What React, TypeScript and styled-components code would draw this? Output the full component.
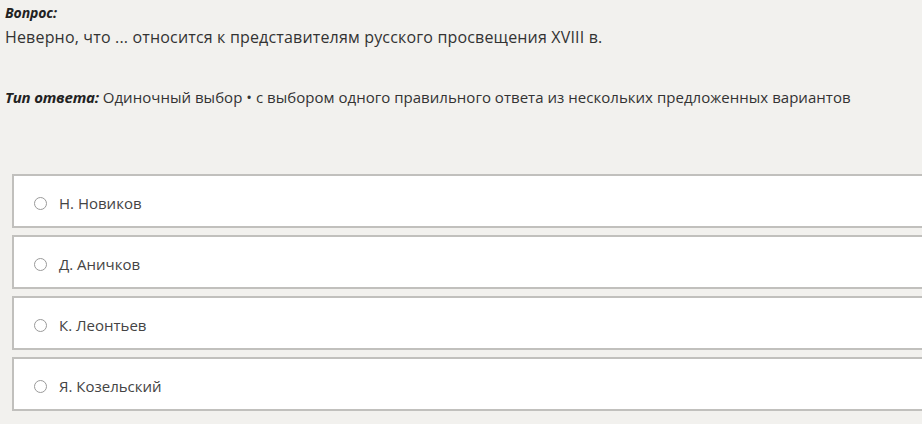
import React from 'react';
import styled, { createGlobalStyle } from 'styled-components';

const GlobalStyle = createGlobalStyle`
  html, body {
    margin: 0;
    padding: 0;
    background: #f2f1ee;
    overflow: hidden;
  }
  body {
    font-family: 'Open Sans', 'Noto Sans', 'Liberation Sans', sans-serif;
    color: #333;
  }
`;

const Page = styled.div`
  padding: 3px 0 0 5px;
`;

const Label = styled.div`
  font-size: 14px;
  font-weight: 700;
  font-style: italic;
  letter-spacing: -0.1px;
  line-height: 20px;
  color: #222;
`;

const Question = styled.div`
  font-size: 16px;
  line-height: 27px;
  padding-top: 1px;
  letter-spacing: 0.17px;
  color: #333;
`;

const AnswerType = styled.div`
  margin-top: 34px;
  font-size: 15px;
  line-height: 24px;
  letter-spacing: 0.03px;
  color: #333;

  b {
    font-style: italic;
    letter-spacing: -0.2px;
    color: #222;
  }
`;

const Options = styled.div`
  margin: 65px -40px 0 7px;
  display: flex;
  flex-direction: column;
  gap: 7px;
`;

const Option = styled.label`
  box-sizing: border-box;
  display: flex;
  align-items: center;
  gap: 12px;
  height: 54px;
  padding: 4px 0 0 20px;
  background: #fff;
  border: 2px solid #c1c0bd;
  font-size: 15px;
  color: #444;
  cursor: pointer;
`;

const Radio = styled.span`
  width: 11px;
  height: 11px;
  border-radius: 50%;
  border: 1.5px solid #9a9a9a;
  background: #fff;
  flex-shrink: 0;
`;

const options = ['Н. Новиков', 'Д. Аничков', 'К. Леонтьев', 'Я. Козельский'];

const App: React.FC = () => {
  return (
    <Page>
      <GlobalStyle />
      <Label>Вопрос:</Label>
      <Question>Неверно, что ... относится к представителям русского просвещения XVIII в.</Question>
      <AnswerType>
        <b>Тип ответа:</b> Одиночный выбор • с выбором одного правильного ответа из нескольких предложенных вариантов
      </AnswerType>
      <Options>
        {options.map((o) => (
          <Option key={o}>
            <Radio />
            {o}
          </Option>
        ))}
      </Options>
    </Page>
  );
};

export default App;
